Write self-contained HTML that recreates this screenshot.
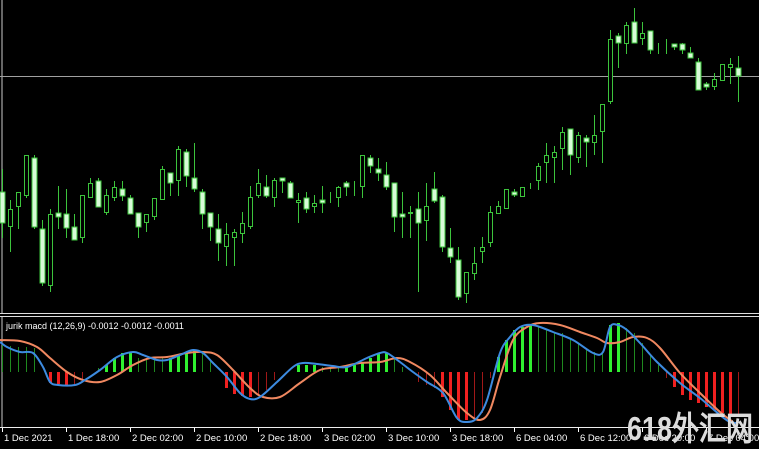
<!DOCTYPE html>
<html><head><meta charset="utf-8"><style>
html,body{margin:0;padding:0;background:#000;width:759px;height:449px;overflow:hidden}
svg{display:block}
text{font-family:"Liberation Sans",sans-serif}
</style></head><body>
<svg id="s" width="759" height="449" viewBox="0 0 759 449" xmlns="http://www.w3.org/2000/svg">
<rect width="759" height="449" fill="#000"/>
<line x1="2" y1="0" x2="2" y2="313" stroke="#ccc" stroke-width="1"/>
<line x1="0" y1="76.5" x2="759" y2="76.5" stroke="#a0a0a0" stroke-width="1"/>
<line x1="0" y1="313.5" x2="759" y2="313.5" stroke="#ddd"/>
<line x1="0" y1="316.5" x2="759" y2="316.5" stroke="#ddd"/>
<line x1="2" y1="317" x2="2" y2="427" stroke="#ccc"/>
<line x1="0" y1="427.5" x2="759" y2="427.5" stroke="#eee"/>
<g id="c"></g>
<g id="h"></g>
<path id="ob" fill="none" stroke="#f08860" stroke-width="2" stroke-linejoin="round"/>
<path id="bl" fill="none" stroke="#3d8be0" stroke-width="2" stroke-linejoin="round"/>
<text x="6" y="329" font-size="9" fill="#fff">jurik macd (12,26,9) -0.0012 -0.0012 -0.0011</text>
<g id="ax" font-size="9.5" fill="#fff"></g>
<text x="627" y="440" font-size="33" font-weight="bold" fill="#dcdcdc" font-family="Liberation Sans,'Noto Sans CJK SC',sans-serif" textLength="126" lengthAdjust="spacingAndGlyphs">618外汇网</text>
</svg>
<script>
var C=[[192,223,169,238,1],[209,227,200,252,0],[192,207,192,229,0],[155,196,155,198,0],[158,227,155,229,1],[229,283,220,286,1],[214,286,209,292,0],[213,217,186,229,1],[214,228,189,238,1],[227,240,214,240,1],[195,238,195,243,0],[183,198,178,198,0],[181,207,178,207,1],[195,213,189,215,0],[187,198,181,201,0],[189,196,181,201,1],[198,214,195,214,1],[213,227,213,238,1],[214,223,214,232,0],[198,217,198,220,0],[169,200,166,200,0],[173,183,173,196,1],[149,181,146,196,0],[152,176,149,187,1],[178,189,143,192,1],[192,214,189,229,1],[213,227,213,241,1],[229,243,214,261,1],[234,247,223,266,0],[232,238,229,266,0],[223,234,212,243,0],[197,227,186,229,0],[183,196,169,198,0],[187,196,175,198,1],[180,198,178,207,0],[178,181,178,193,1],[183,198,181,198,1],[200,203,193,223,0],[198,209,192,213,1],[203,207,195,213,0],[200,203,186,213,1],[201,201,192,203,0],[187,198,186,207,0],[183,187,181,196,1],[189,189,181,196,0],[155,187,155,198,0],[158,166,155,173,1],[169,173,158,181,1],
[175,187,162,190,1],[183,217,183,232,1],[214,217,192,238,1],[212,214,206,238,0],[209,223,192,292,1],[206,221,183,241,0],[189,201,172,203,1],[197,247,195,252,1],[248,257,228,263,1],[260,297,247,300,1],[272,294,272,303,0],[263,274,247,280,0],[247,252,237,263,0],[212,243,206,247,0],[206,214,201,214,0],[189,209,189,209,0],[192,195,189,197,1],[187,197,187,197,0],[183,183,183,189,0],[166,181,163,190,0],[155,163,143,183,0],[152,158,146,183,0],[132,149,127,170,0],[129,155,129,175,1],[135,158,132,163,0],[138,142,135,167,1],[135,143,115,155,0],[104,132,104,163,0],[39,102,30,104,0],[36,43,33,68,1],[25,44,22,54,0],[22,43,8,43,1],[33,39,22,45,0],[31,50,31,54,1],[47,47,43,54,0],[43,44,39,54,0],[44,47,44,50,1],[44,50,43,54,1],[53,58,47,58,1],[62,90,58,90,1],[84,87,82,90,1],[79,87,73,90,0],[64,81,64,81,0],[64,68,58,84,0],[68,76,56,102,1]];
var s='';
C.forEach(function(c,k){var x=2+8*k;
s+='<line x1="'+(x+.5)+'" y1="'+c[2]+'" x2="'+(x+.5)+'" y2="'+c[3]+'" stroke="#3cc43c"/>';
var h=Math.max(c[1]-c[0],1);
if(c[4])s+='<rect x="'+(x-2)+'" y="'+c[0]+'" width="5" height="'+h+'" fill="#d8fbd8" stroke="#3cc43c" stroke-width="1"/>';
else s+='<rect x="'+(x-1.5)+'" y="'+(c[0]+.5)+'" width="4" height="'+Math.max(h-1,0)+'" fill="#000" stroke="#3cc43c" stroke-width="1"/>';
});
document.getElementById('c').innerHTML=s;
var H=[[0,345,0],[1,346,0],[2,347,0],[3,347,0],[4,348,0],[6,383,1],[7,384,1],[8,385,1],[9,385,0],[10,380,0],[12,368,0],[13,365,1],[14,358,1],[15,353,1],[16,353,1],[17,358,0],[18,358,0],[19,358,0],[20,358,0],[21,358,1],[22,355,1],[23,352,1],[24,350,1],[25,352,0],[26,360,0],[28,388,1],[29,394,1],[30,396,1],[31,397,1],[32,396,0],[33,390,0],[34,380,0],[37,365,1],[38,365,1],[39,365,1],[40,367,0],[41,367,0],[42,367,0],[43,367,1],[44,365,1],[45,363,1],[46,358,1],[47,353,1],[48,353,1],[49,358,0],[50,367,0],[52,382,0],[53,385,0],[54,388,0],[55,397,1],[56,410,1],[57,420,1],[58,420,1],[59,420,0],[60,413,0],[61,378,0],[62,357,1],[63,340,1],[64,330,1],[65,327,1],[66,325,1],[67,327,0],[68,330,0],[69,332,0],[70,333,0],[71,338,0],[72,343,0],[73,348,0],[74,352,0],[75,353,0],[76,325,1],[77,323,1],[78,328,0],[79,333,0],[80,343,0],[81,355,0],[82,365,0],[83,378,0],[84,387,1],[85,395,1],[86,400,1],[87,403,1],[88,407,1],[89,410,1],[90,413,1],[91,415,1],[92,415,0]];
var z=372;s='';
H.forEach(function(b){var x=2+8*b[0];var neg=b[1]>z;
var col=b[2]?(neg?'#f02020':'#30f030'):(neg?'#a01818':'#1f8a1f');
var w=b[2]?3:1;var y1=Math.min(z,b[1]),hh=Math.abs(b[1]-z);
s+='<rect x="'+(x+.5-w/2)+'" y="'+y1+'" width="'+w+'" height="'+hh+'" fill="'+col+'"/>';});
document.getElementById('h').innerHTML=s;
function smooth(str){var p=str.split(' ').map(function(q){return q.split(',').map(Number)});
var d='M'+p[0][0]+','+p[0][1];
for(var i=0;i<p.length-1;i++){var a=p[i-1]||p[i],b=p[i],c=p[i+1],e=p[i+2]||c;
d+=' C'+(b[0]+(c[0]-a[0])/6).toFixed(1)+','+(b[1]+(c[1]-a[1])/6).toFixed(1)+' '+(c[0]-(e[0]-b[0])/6).toFixed(1)+','+(c[1]-(e[1]-b[1])/6).toFixed(1)+' '+c[0]+','+c[1];}
return d;}
document.getElementById('bl').setAttribute('d',smooth("0,342 7,347 20,352 33,353 43,367 50,382 58,385 75,385 85,380 100,370 117,357 133,352 143,355 157,360 167,360 180,355 193,350 203,353 213,363 227,377 240,393 250,399 260,397 277,382 293,367 303,363 317,364 333,366 347,367 367,358 380,353 387,353 400,362 413,372 427,382 443,393 457,418 467,422 477,418 487,400 500,353 510,337 520,327 533,325 553,332 573,340 593,353 603,352 610,327 618,325 627,330 640,343 657,362 680,383 700,398 720,415 730,422 738,423"));
document.getElementById('ob').setAttribute('d',smooth("0,340 20,341 37,347 50,358 67,372 83,380 100,382 117,375 133,365 150,358 167,357 187,353 203,352 217,355 233,370 250,388 263,397 280,397 300,383 320,370 340,367 360,363 380,362 397,358 410,362 430,375 447,393 467,413 480,420 490,410 500,377 513,340 527,327 540,323 560,325 580,332 597,338 607,343 620,342 633,337 647,338 660,348 680,373 700,393 720,412 733,422"));
var L=["1 Dec 2021","1 Dec 18:00","2 Dec 02:00","2 Dec 10:00","2 Dec 18:00","3 Dec 02:00","3 Dec 10:00","3 Dec 18:00","6 Dec 04:00","6 Dec 12:00","6 Dec 20:00","7 Dec 04:00"];
s='';L.forEach(function(t,i){var x=2+64*i;s+='<line x1="'+(x+.5)+'" y1="428" x2="'+(x+.5)+'" y2="432" stroke="#fff"/><text x="'+(x+2)+'" y="441">'+t+'</text>';});
document.getElementById('ax').innerHTML=s;
</script>
</body></html>
